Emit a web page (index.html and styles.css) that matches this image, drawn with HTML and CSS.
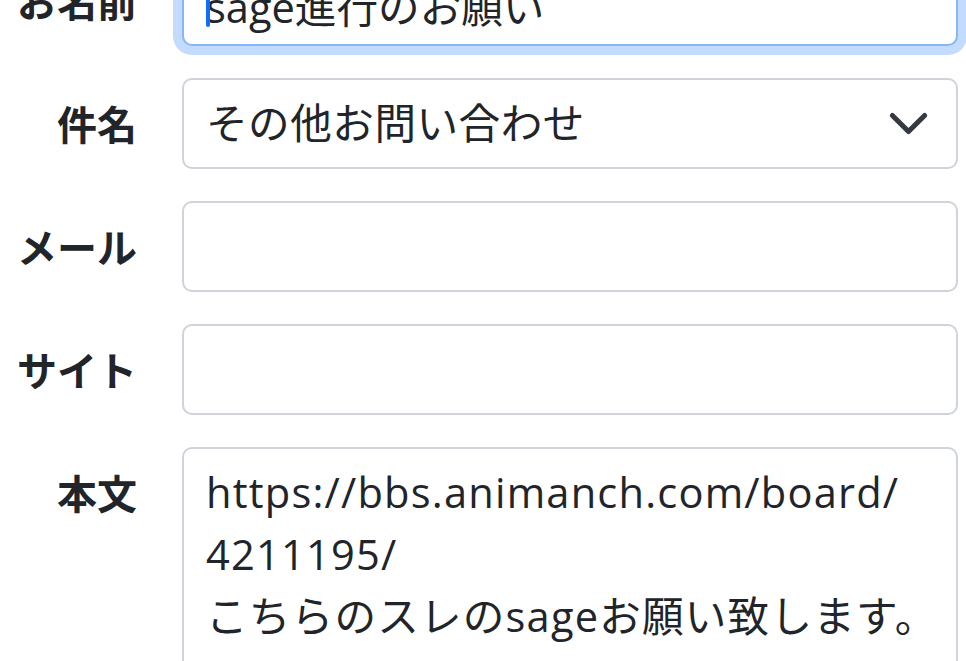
FILE: index.html
```html
<!DOCTYPE html>
<html lang="ja">
<head>
    <meta charset="UTF-8">
    <meta name="viewport" content="width=device-width, initial-scale=1.0">
    <title>お問い合わせ</title>
    <link rel="stylesheet" href="styles.css">
</head>
<body>
    <form class="contact-form">
        <div class="form-row">
            <label class="form-label" for="name">お名前</label>
            <div class="form-field">
                <input class="form-control is-focused" id="name" type="text" value="sage進行のお願い">
                <span class="caret"></span>
            </div>
        </div>
        <div class="form-row">
            <label class="form-label" for="subject">件名</label>
            <div class="form-field">
                <select class="form-control form-select" id="subject">
                    <option>その他お問い合わせ</option>
                </select>
                <svg class="select-arrow" viewBox="0 0 16 16" width="43" height="43">
                    <path d="m2 5 6 6 6-6" fill="none" stroke="#343a40" stroke-width="1.9" stroke-linecap="round" stroke-linejoin="round"/>
                </svg>
            </div>
        </div>
        <div class="form-row">
            <label class="form-label" for="mail">メール</label>
            <div class="form-field">
                <input class="form-control" id="mail" type="email">
            </div>
        </div>
        <div class="form-row">
            <label class="form-label" for="site">サイト</label>
            <div class="form-field">
                <input class="form-control" id="site" type="url">
            </div>
        </div>
        <div class="form-row">
            <label class="form-label" for="body">本文</label>
            <div class="form-field">
                <textarea class="form-control form-textarea" id="body">https://bbs.animanch.com/board/
4211195/
こちらのスレのsageお願い致します。</textarea>
            </div>
        </div>
    </form>
</body>
</html>
```

FILE: styles.css
```css
body {
    margin: 0;
    background-color: #fff;
    color: #212529;
    font-family: "Open Sans", "Noto Sans CJK JP", sans-serif;
    overflow: hidden;
}
.contact-form {
    display: flex;
    flex-direction: column;
    gap: 32px;
    margin-top: -45px;
    padding-right: 8px;
}
.form-row {
    display: grid;
    grid-template-columns: 137px 1fr;
    column-gap: 45px;
    align-items: start;
}
.form-label {
    font-family: "Noto Sans CJK JP", sans-serif;
    font-weight: 700;
    font-size: 40px;
    line-height: 62.4px;
    padding-top: 14.3px;
    text-align: right;
    white-space: nowrap;
}
.form-field {
    position: relative;
}
.form-control {
    display: block;
    box-sizing: border-box;
    width: 100%;
    height: 91px;
    margin: 0;
    padding: 11.7px 22px;
    font-family: "Open Sans", "Noto Sans CJK JP", sans-serif;
    font-size: 41.6px;
    line-height: 1.5;
    color: #212529;
    background-color: #fff;
    border: 2.6px solid #ced4da;
    border-radius: 10px;
    outline: none;
}
.form-control.is-focused {
    border-color: #86b7fe;
    box-shadow: 0 0 0 9px rgba(13, 110, 253, 0.25);
    padding-top: 16px;
    padding-bottom: 7.4px;
}
.form-select {
    appearance: none;
    -webkit-appearance: none;
    padding-right: 80px;
    letter-spacing: 0.5px;
}
.select-arrow {
    position: absolute;
    right: 28px;
    top: 24px;
    pointer-events: none;
}
.form-textarea {
    height: 300px;
    padding-right: 6px;
    resize: none;
    overflow: hidden;
    white-space: pre-wrap;
    letter-spacing: 1.2px;
}
.caret {
    position: absolute;
    left: 24px;
    top: 24px;
    width: 4px;
    height: 48px;
    border-radius: 2px;
    background-color: #0d6efd;
}
```
